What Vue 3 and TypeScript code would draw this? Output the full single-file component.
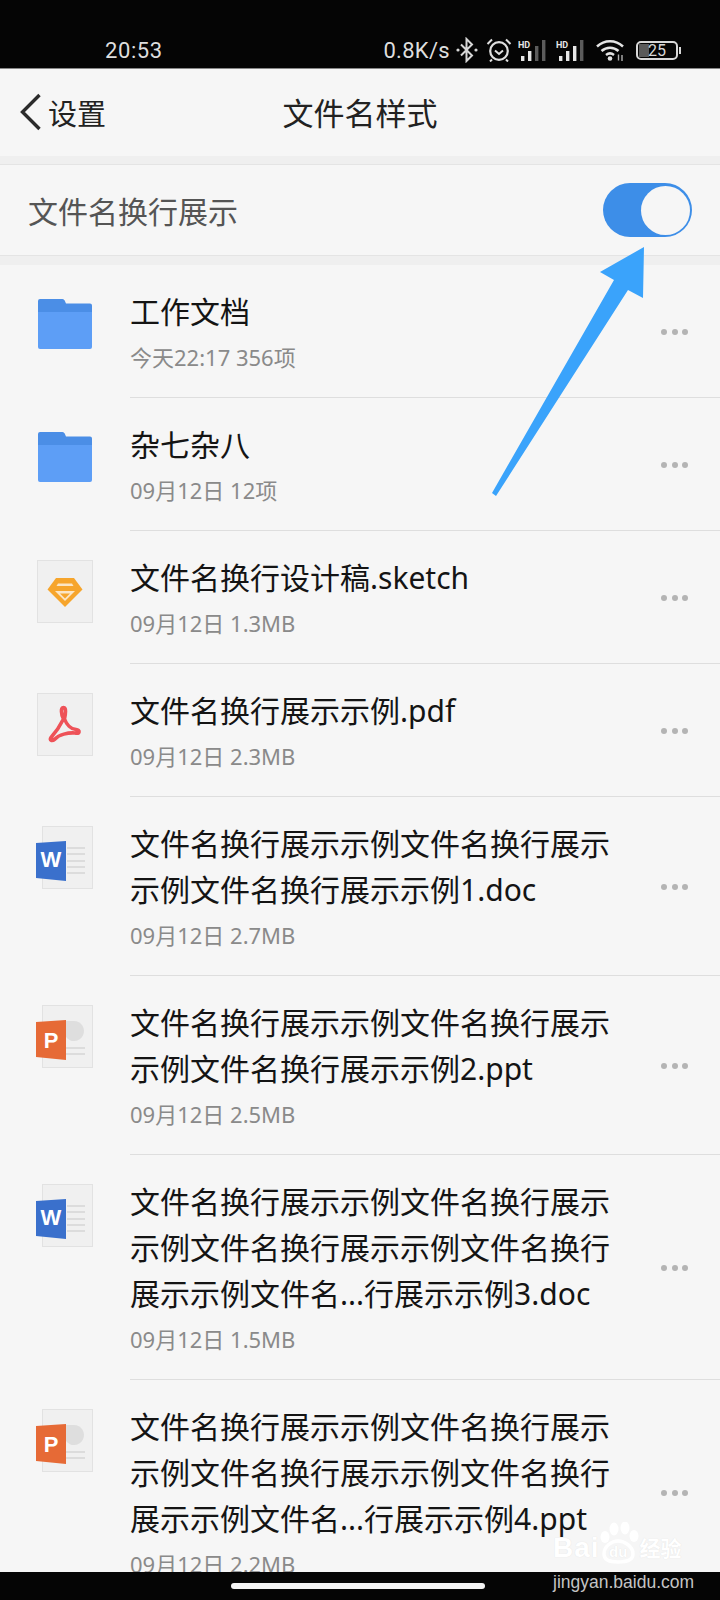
<template>
  <div class="phone">
    <header class="status">
      <span class="time">20:53</span>
      <div class="status-right">
        <span class="speed">0.8K/s</span>
        <svg class="bt" width="22" height="26" viewBox="0 0 22 26">
          <path d="M5 7.500l11 11-5.500 5.500V2l5.500 5.500-11 11" fill="none" stroke="#d8d8d8" stroke-width="2" />
          <circle cx="2" cy="13" r="1.600" fill="#d8d8d8" />
          <circle cx="20" cy="13" r="1.600" fill="#d8d8d8" />
        </svg>
        <svg class="alarm" width="26" height="24" viewBox="0 0 26 24">
          <circle cx="13" cy="13" r="8.800" fill="none" stroke="#e0e0e0" stroke-width="2.200" />
          <path d="M9 12.500l4 3.500 4-3.500" fill="none" stroke="#e0e0e0" stroke-width="2" />
          <path d="M1.500 6L6 1.500M24.500 6L20 1.500M6 21.500l-2 2M20 21.500l2 2" stroke="#e0e0e0" stroke-width="2" />
        </svg>
        <svg class="signal" width="32" height="22" viewBox="0 0 32 22">
          <text x="0" y="8.500" class="hd">HD</text>
          <rect x="3" y="17" width="3.400" height="5" fill="#e6e6e6" />
          <rect x="10" y="12" width="3.400" height="10" fill="#e6e6e6" />
          <rect x="17" y="7" width="3.400" height="15" fill="#5c5c5c" />
          <rect x="24" y="1" width="3.400" height="21" fill="#5c5c5c" />
        </svg>
        <svg class="signal" width="32" height="22" viewBox="0 0 32 22">
          <text x="0" y="8.500" class="hd">HD</text>
          <rect x="3" y="17" width="3.400" height="5" fill="#e6e6e6" />
          <rect x="10" y="12" width="3.400" height="10" fill="#e6e6e6" />
          <rect x="17" y="7" width="3.400" height="15" fill="#e6e6e6" />
          <rect x="24" y="1" width="3.400" height="21" fill="#5c5c5c" />
        </svg>
        <svg class="wifi" width="30" height="22" viewBox="0 0 30 22">
          <path d="M1 7.500C8.500 .5 19.500 .5 27 7.500M5.500 12c5-4.500 12-4.500 17 0M10 16c2.500-2 5.500-2 8 0" fill="none" stroke="#e4e4e4" stroke-width="2.500" />
          <circle cx="14" cy="19.500" r="2.300" fill="#e4e4e4" />
          <path d="M22.500 15.500v6M26 16v6" stroke="#b0b0b0" stroke-width="1.400" />
        </svg>
        <div class="battery"><i class="battery-fill"></i><span>25</span></div>
      </div>
    </header>

    <nav class="nav">
      <div class="back">
        <svg width="24" height="38" viewBox="0 0 24 38">
          <path d="M20.500 2L3.500 19l17 17" fill="none" stroke="#2b2b2b" stroke-width="3.400" />
        </svg>
        <span>设置</span>
      </div>
      <div class="nav-title">文件名样式</div>
      <div></div>
    </nav>

    <section class="toggle-row">
      <span class="toggle-label">文件名换行展示</span>
      <div class="switch"><i class="knob"></i></div>
    </section>

    <ul class="list">
      <li v-for="f in files" :key="f.name" class="row">
        <div class="icon">
          <svg v-if="f.type === 'folder'" class="folder" width="54" height="50" viewBox="0 0 54 50">
            <path d="M2 0h22.500q1.500 0 2.200 1.500L28 4.500h24q2 0 2 2V13H0V2q0-2 2-2z" fill="#4b8ee6" />
            <path d="M0 13h54v35q0 2-2 2H2q-2 0-2-2z" fill="#5d9ef6" />
          </svg>

          <svg v-else-if="f.type === 'sketch'" width="56" height="63" viewBox="0 0 56 63">
            <rect x=".5" y=".5" width="55" height="62" fill="#f0f0f0" stroke="#e2e2e2" />
            <path d="M19 18h18l8.500 11.500L28 47 10.500 29.500z" fill="#f6a52c" />
            <path d="M21 23.500h14l1.500 2.500h-17z" fill="#fbe6c6" />
            <path d="M18 31h20L28 41z" fill="#fbe6c6" />
            <path d="M23 33.500h10l-5 5z" fill="#f6a52c" />
          </svg>

          <svg v-else-if="f.type === 'pdf'" width="56" height="63" viewBox="0 0 56 63">
            <rect x=".5" y=".5" width="55" height="62" fill="#f0f0f0" stroke="#e2e2e2" />
            <path d="M26.500 14.500C23.500 14.500 24 21 26.500 26C23 33 19 39 14 44.500C12 47.500 15 48.500 18 46C22 41.500 31 39.500 38 40C43 41 43.500 37 39 36.500C34 36 29.500 31.500 27.500 26C28.500 21 29.500 14.500 26.500 14.500Z" fill="none" stroke="#ee5258" stroke-width="3.600" stroke-linejoin="round" />
          </svg>

          <svg v-else-if="f.type === 'doc'" class="office" width="58" height="64" viewBox="0 0 58 64">
            <rect x="6.500" y=".5" width="50" height="62" fill="#f0f0f0" stroke="#e2e2e2" />
            <path d="M31 22h18M31 28h18M31 35h18M31 41h18M31 47h18" stroke="#dcdcdc" stroke-width="2" />
            <path d="M0 17l30-2v40L0 52z" fill="#3a70cc" />
            <text x="15" y="41" class="office-letter">W</text>
          </svg>

          <svg v-else class="office" width="58" height="64" viewBox="0 0 58 64">
            <rect x="6.500" y=".5" width="50" height="62" fill="#f0f0f0" stroke="#e2e2e2" />
            <path d="M38 16a10 10 0 1 1-8 16V16z" fill="#dedede" />
            <path d="M30 43h19M30 49h19" stroke="#dcdcdc" stroke-width="2" />
            <path d="M0 17l30-2v40L0 52z" fill="#e66a36" />
            <text x="15" y="43" class="office-letter">P</text>
          </svg>
        </div>
        <div class="info">
          <div class="name">{{ f.name }}</div>
          <div class="meta">{{ f.meta }}</div>
        </div>
        <div class="more"><i></i><i></i><i></i></div>
      </li>
    </ul>

    <div class="home"><i></i></div>

    <!-- annotation drawn over the screenshot -->
    <svg class="arrow" width="720" height="520" viewBox="0 0 720 520">
      <path d="M492 493L496 496L628 290L643 298L644 247L600 272L614 280Z" fill="#3aa3fb" />
    </svg>

    <div class="mark">
      <div class="mark-top">
        <span class="mark-bai">Bai</span>
        <svg class="paw" width="40" height="42" viewBox="0 0 40 42">
          <ellipse cx="6" cy="15" rx="4.500" ry="6" fill="#fff" />
          <ellipse cx="15" cy="7" rx="4.500" ry="6.500" fill="#fff" />
          <ellipse cx="26" cy="6" rx="4.500" ry="6.500" fill="#fff" />
          <ellipse cx="35" cy="14" rx="4.500" ry="6" fill="#fff" />
          <path d="M5 32c0-8 8-13 14-13s15 5 15 13c0 6-7 8-15 8S5 38 5 32z" fill="none" stroke="#fff" stroke-width="3.500" />
          <text x="10" y="35" class="mark-du">du</text>
        </svg>
        <span class="mark-cn">经验</span>
      </div>
      <div class="mark-url">jingyan.baidu.com</div>
    </div>
  </div>
</template>

<script setup lang="ts">
interface FileItem {
  type: 'folder' | 'sketch' | 'pdf' | 'doc' | 'ppt'
  name: string
  meta: string
}

const long1 = '文件名换行展示示例'.repeat(3)
const long2 = '文件名换行展示示例'.repeat(4) + '文件名...行展示示例'

const files: FileItem[] = [
  { type: 'folder', name: '工作文档', meta: '今天22:17 356项' },
  { type: 'folder', name: '杂七杂八', meta: '09月12日 12项' },
  { type: 'sketch', name: '文件名换行设计稿.sketch', meta: '09月12日 1.3MB' },
  { type: 'pdf', name: '文件名换行展示示例.pdf', meta: '09月12日 2.3MB' },
  { type: 'doc', name: long1 + '1.doc', meta: '09月12日 2.7MB' },
  { type: 'ppt', name: long1 + '2.ppt', meta: '09月12日 2.5MB' },
  { type: 'doc', name: long2 + '3.doc', meta: '09月12日 1.5MB' },
  { type: 'ppt', name: long2 + '4.ppt', meta: '09月12日 2.2MB' }
]
</script>

<style>
html,
body {
  margin: 0;
  background: #000;
}
</style>

<style scoped>
.phone {
  position: relative;
  width: 720px;
  height: 1600px;
  display: flex;
  flex-direction: column;
  overflow: hidden;
  background: #f6f6f6;
  font-family: "Noto Sans", "Noto Sans CJK SC", sans-serif;
}

.status {
  height: 68px;
  flex: none;
  box-sizing: border-box;
  padding: 32px 42px 0 105px;
  display: flex;
  align-items: center;
  justify-content: space-between;
  background: #050505;
  color: #dedede;
  font-family: Roboto, sans-serif;
  font-size: 22px;
}
.time {
  letter-spacing: 0.6px;
}
.status-right {
  display: flex;
  align-items: center;
}
.speed {
  letter-spacing: 0.3px;
  margin-right: 6px;
}
.bt {
  margin-right: 8px;
}
.alarm {
  margin-right: 6px;
}
.signal {
  margin-right: 6px;
}
.signal + .signal {
  margin-right: 8px;
}
.wifi {
  margin-right: 10px;
}
.hd {
  font-size: 9px;
  font-weight: 700;
  fill: #e6e6e6;
}
.battery {
  position: relative;
  width: 42px;
  height: 19px;
  box-sizing: border-box;
  border: 2px solid #d8d8d8;
  border-radius: 5px;
  display: flex;
  align-items: center;
  justify-content: center;
  font-size: 16px;
  color: #d8d8d8;
}
.battery::after {
  content: "";
  position: absolute;
  right: -5px;
  top: 4px;
  width: 2px;
  height: 7px;
  background: #d8d8d8;
}
.battery-fill {
  position: absolute;
  left: 1px;
  top: 1px;
  bottom: 1px;
  width: 10px;
  background: #5a5a5a;
}
.battery span {
  position: relative;
}

.nav {
  height: 88px;
  flex: none;
  display: grid;
  grid-template-columns: 1fr auto 1fr;
  align-items: center;
  box-sizing: border-box;
  padding-bottom: 2px;
  color: #222;
  border-top: 1px solid #888;
}
.back {
  display: flex;
  align-items: center;
  padding-left: 19px;
  font-size: 29px;
  gap: 5px;
}
.back svg {
  display: block;
}
.nav-title {
  font-size: 31px;
}

.toggle-row {
  height: 100px;
  flex: none;
  box-sizing: border-box;
  padding: 9px 28px 0;
  display: flex;
  align-items: center;
  justify-content: space-between;
  background: linear-gradient(#efefef 8px, #e4e4e4 8px, #e4e4e4 9px, #f6f6f6 9px, #f6f6f6 99px, #e4e4e4 99px);
  font-size: 30px;
  color: #555;
}
.toggle-label {
  margin-top: -2px;
}
.switch {
  position: relative;
  width: 89px;
  height: 54px;
  margin-top: -1px;
  border-radius: 27px;
  background: #3d8ee8;
}
.knob {
  position: absolute;
  right: 2px;
  top: 2.500px;
  width: 49px;
  height: 49px;
  border-radius: 50%;
  background: #f6f6f6;
}

.list {
  flex: 1;
  min-height: 0;
  margin: 0;
  padding: 9px 0 0;
  list-style: none;
  background: linear-gradient(#efefef 9px, #f6f6f6 9px);
  overflow: hidden;
}
.row {
  position: relative;
  display: flex;
  align-items: flex-start;
}
.row::after {
  content: "";
  position: absolute;
  left: 130px;
  right: 0;
  bottom: 0;
  height: 1px;
  background: #dedede;
}
.icon {
  width: 130px;
  flex: none;
  box-sizing: border-box;
  padding: 29px 0 0 37px;
}
.icon svg {
  display: block;
}
.icon .folder {
  margin: 5px 0 0 1px;
}
.icon .office {
  margin-left: -1px;
}
.office-letter {
  font-family: "Liberation Sans", sans-serif;
  font-size: 22px;
  font-weight: 700;
  fill: #fff;
  text-anchor: middle;
}
.info {
  width: 482px;
  flex: none;
  padding: 24px 0 26px;
}
.name {
  font-size: 30px;
  line-height: 46px;
  color: #141414;
}
.meta {
  margin-top: 7px;
  font-size: 22px;
  line-height: 30px;
  color: #8a8a8a;
}
.more {
  align-self: center;
  margin-left: 49px;
  display: flex;
  gap: 4.500px;
}
.more i {
  width: 6px;
  height: 6px;
  border-radius: 50%;
  background: #b4b4b4;
}

.home {
  height: 28px;
  flex: none;
  background: #050505;
  position: relative;
}
.home i {
  position: absolute;
  left: 231px;
  top: 11px;
  width: 254px;
  height: 6px;
  border-radius: 3px;
  background: #f4f4f4;
}

.arrow {
  position: absolute;
  left: 0;
  top: 0;
}

.mark {
  position: absolute;
  left: 553px;
  top: 1522px;
  width: 135px;
}
.mark-top {
  display: flex;
  align-items: flex-end;
  height: 42px;
  color: #fff;
  white-space: nowrap;
  text-shadow: 0 0 1px #ddd;
}
.mark-bai {
  font-family: "Liberation Sans", sans-serif;
  font-size: 28px;
  line-height: 32px;
  font-weight: 700;
  letter-spacing: 1px;
}
.paw {
  margin: 0 1px 0 -1px;
  flex: none;
}
.mark-du {
  font-family: "Liberation Sans", sans-serif;
  font-size: 15px;
  font-weight: 700;
  fill: #fff;
}
.mark-cn {
  font-size: 21px;
  line-height: 32px;
  font-weight: 700;
}
.mark-url {
  margin-top: 9px;
  font-family: "Liberation Sans", sans-serif;
  font-size: 17.500px;
  line-height: 18px;
  color: #c4c4c4;
  white-space: nowrap;
}
</style>
